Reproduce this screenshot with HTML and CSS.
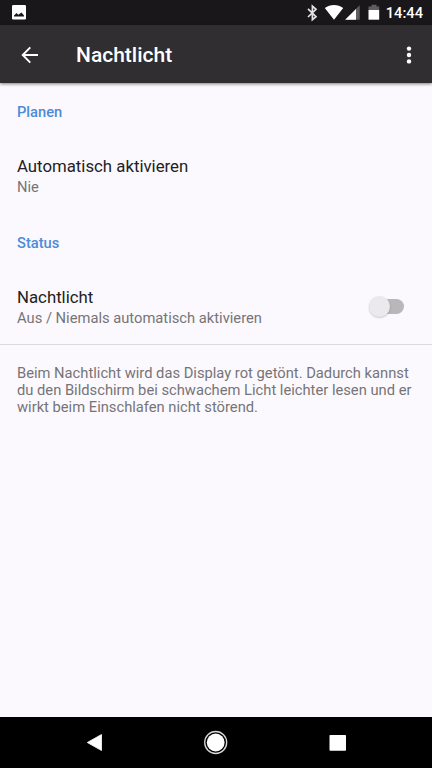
FILE: index.html
```html
<!DOCTYPE html>
<html lang="de">
<head>
<meta charset="utf-8">
<title>Nachtlicht</title>
<link rel="stylesheet" href="styles.css">
</head>
<body>
<div class="screen">
  <div class="status-bar">
    <svg class="picture-icon" width="14" height="15" viewBox="0 0 14 15"><rect width="14" height="14.5" rx="1.3" fill="#fff"/><path d="M2 11.5V10.500L4.500 8l1.800 1.800L9.500 7.500l2.500 3v1z" fill="#19171a"/></svg>
    <div class="status-icons">
      <svg width="78" height="25" viewBox="0 0 78 25">
        <path d="M4 8.800l8 7.900-3.600 3V6.200L12 9.300 4 17" fill="none" stroke="#e4e3e5" stroke-width="1.700"/>
        <path d="M20.800 8.100C26.200 3.900 33.800 3.900 39.200 8.100L30 19.700z" fill="#fff"/>
        <path d="M55.700 5.200V19.700H41.200z" fill="#5f5d60"/>
        <path d="M52 8.900V19.700H41.200z" fill="#fff"/>
        <path d="M64.500 10V6.500h3V4.800h5v1.700h2.700V10z" fill="#5f5d60"/>
        <path d="M64.500 10h10.700v9.700H64.500z" fill="#fff"/>
      </svg>
      <span class="clock">14:44</span>
    </div>
  </div>
  <header class="app-bar">
    <svg class="back-icon" width="18" height="18" viewBox="0 0 18 18"><path d="M17 9H2M9.300 1.400L1.700 9l7.600 7.600" fill="none" stroke="#fff" stroke-width="1.900"/></svg>
    <h1>Nachtlicht</h1>
    <svg class="more-icon" width="6" height="18" viewBox="0 0 6 18"><circle cx="3" cy="2.600" r="2.200"/><circle cx="3" cy="9" r="2.200"/><circle cx="3" cy="15.400" r="2.200"/></svg>
  </header>
  <main>
    <h2>Planen</h2>
    <div class="preference">
      <div class="labels">
        <div class="title">Automatisch aktivieren</div>
        <div class="summary">Nie</div>
      </div>
    </div>
    <h2>Status</h2>
    <div class="preference">
      <div class="labels">
        <div class="title">Nachtlicht</div>
        <div class="summary">Aus / Niemals automatisch aktivieren</div>
      </div>
      <div class="switch"><div class="thumb"></div></div>
    </div>
    <p class="footer-text">Beim Nachtlicht wird das Display rot getönt. Dadurch kannst<br>du den Bildschirm bei schwachem Licht leichter lesen und er<br>wirkt beim Einschlafen nicht störend.</p>
  </main>
  <nav class="nav-bar">
    <svg width="122" height="51" viewBox="0 0 122 51"><path d="M54.300 25.500L68.500 17.500v16z" fill="#fff" stroke="#fff" stroke-width=".8" stroke-linejoin="round"/></svg>
    <svg width="122" height="51" viewBox="0 0 122 51"><circle cx="60.700" cy="25.500" r="11" fill="none" stroke="#d8d8d8" stroke-width="1.300"/><circle cx="60.700" cy="25.500" r="8.900" fill="#fff"/></svg>
    <svg width="122" height="51" viewBox="0 0 122 51"><rect x="52.500" y="18" width="16.500" height="15.700" rx=".8" fill="#fff"/></svg>
  </nav>
</div>
</body>
</html>
```
FILE: styles.css
```css
* {
  box-sizing: border-box;
}

body {
  margin: 0;
  font-family: Roboto, "Liberation Sans", sans-serif;
}

.screen {
  display: flex;
  flex-direction: column;
  width: 432px;
  height: 768px;
  background: #fbf9fd;
}

.status-bar {
  display: flex;
  align-items: center;
  justify-content: space-between;
  height: 25px;
  padding: 0 9px 0 12px;
  background: #19171a;
}

.status-icons {
  display: flex;
  align-items: center;
}

.clock {
  margin-left: 4px;
  padding-top: 1px;
  color: #fff;
  font-size: 14.7px;
  font-weight: 500;
}

.app-bar {
  display: flex;
  align-items: center;
  height: 58px;
  padding: 1px 20px 0 21px;
  background: #302e31;
  box-shadow: 0 1px 3px rgba(0, 0, 0, 0.5);
}

.app-bar h1 {
  flex: 1;
  margin: 1px 0 0 37px;
  color: #fff;
  font-size: 21px;
  font-weight: 500;
  line-height: 26px;
}

.more-icon {
  fill: #fff;
}

main {
  flex: 1;
}

h2 {
  height: 57px;
  margin: 0;
  padding-left: 17px;
  color: #4c8bd8;
  font-size: 14.7px;
  font-weight: 500;
  line-height: 58px;
}

.preference {
  display: flex;
  align-items: center;
  justify-content: space-between;
  height: 74px;
  padding: 0 28px 2px 17px;
}

.preference:last-of-type {
  height: 73px;
  padding-bottom: 1px;
}

.title {
  color: #222123;
  font-size: 16.8px;
  line-height: 22px;
}

.summary {
  color: #767477;
  font-size: 14.73px;
  line-height: 20px;
}

.switch {
  display: flex;
  align-items: center;
  width: 34px;
  height: 15px;
  margin-top: -2px;
  border-radius: 8px;
  background: #b9b7ba;
}

.thumb {
  flex: none;
  width: 21px;
  height: 21px;
  margin-left: -1px;
  border-radius: 50%;
  background: #ebe9ec;
  box-shadow: 0 1px 2px rgba(0, 0, 0, 0.2);
}

.footer-text {
  margin: 0;
  padding: 20px 17px 0;
  border-top: 1px solid #dbd9dc;
  color: #767477;
  font-size: 14.73px;
  line-height: 17.2px;
  white-space: nowrap;
}

.nav-bar {
  display: flex;
  justify-content: center;
  height: 51px;
  background: #000;
}
```
